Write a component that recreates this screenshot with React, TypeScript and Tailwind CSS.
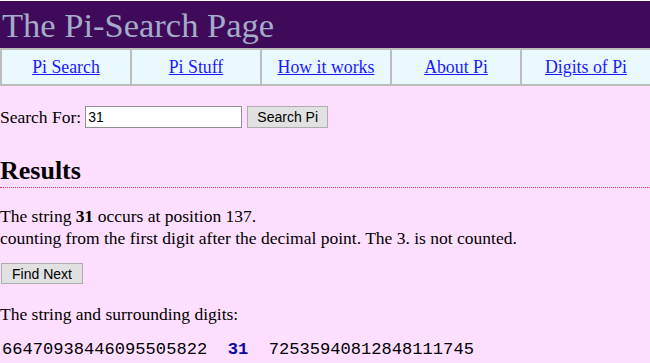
const navItems = ["Pi Search", "Pi Stuff", "How it works", "About Pi", "Digits of Pi"]

export default function App() {
  return (
    <div className="min-h-[363px] w-[650px] bg-[#ffdfff] text-black font-['Liberation_Serif',serif] text-[17.5px] overflow-hidden">
      <header className="border-t border-white bg-[#3f0a5a] h-[48px] px-[2px]">
        <h1 className="text-[34.5px] leading-[48px] text-[#a3acc8] font-normal">The Pi-Search Page</h1>
      </header>
      <nav className="flex h-[38px] bg-[#eaf8ff] border-y-2 border-[#bdbdbd]">
        {navItems.map((item) => (
          <div key={item} className="flex-1 flex items-center justify-center border-l-2 border-[#bdbdbd]">
            <a href="#" className="text-[#1a1aff] underline text-[17.8px]">{item}</a>
          </div>
        ))}
      </nav>

      <form className="flex items-center mt-[19px] h-[24px]">
        <label className="mr-[4px]">Search For:</label>
        <input
          defaultValue="31"
          className="w-[157px] h-[22px] bg-white border border-[#8f8f8f] px-[2px] font-['Liberation_Sans',sans-serif] text-[14px] outline-none"
        />
        <button
          type="button"
          className="ml-[5px] w-[81px] h-[22px] bg-[#e1e1e1] border border-[#adadad] font-['Liberation_Sans',sans-serif] text-[14px]"
        >
          Search Pi
        </button>
      </form>

      <h2 className="mt-[28px] text-[26px] font-bold leading-[28px] pb-[2px] border-b border-dotted border-[#ff2f45]">Results</h2>

      <p className="mt-[17px] leading-[22px]">
        The string <b>31</b> occurs at position 137.
        <br />
        counting from the first digit after the decimal point. The 3. is not counted.
      </p>

      <button
        type="button"
        className="mt-[14px] ml-[1px] w-[82px] h-[21px] bg-[#e1e1e1] border border-[#adadad] font-['Liberation_Sans',sans-serif] text-[14px]"
      >
        Find Next
      </button>

      <p className="mt-[17px] leading-[22px]">The string and surrounding digits:</p>

      <p className="mt-[14px] font-['Liberation_Mono',monospace] text-[17.1px] leading-[22px] whitespace-pre px-[2px]">
        {"66470938446095505822  "}
        <b className="text-[#0a0aa0]">31</b>
        {"  72535940812848111745"}
      </p>
    </div>
  )
}
